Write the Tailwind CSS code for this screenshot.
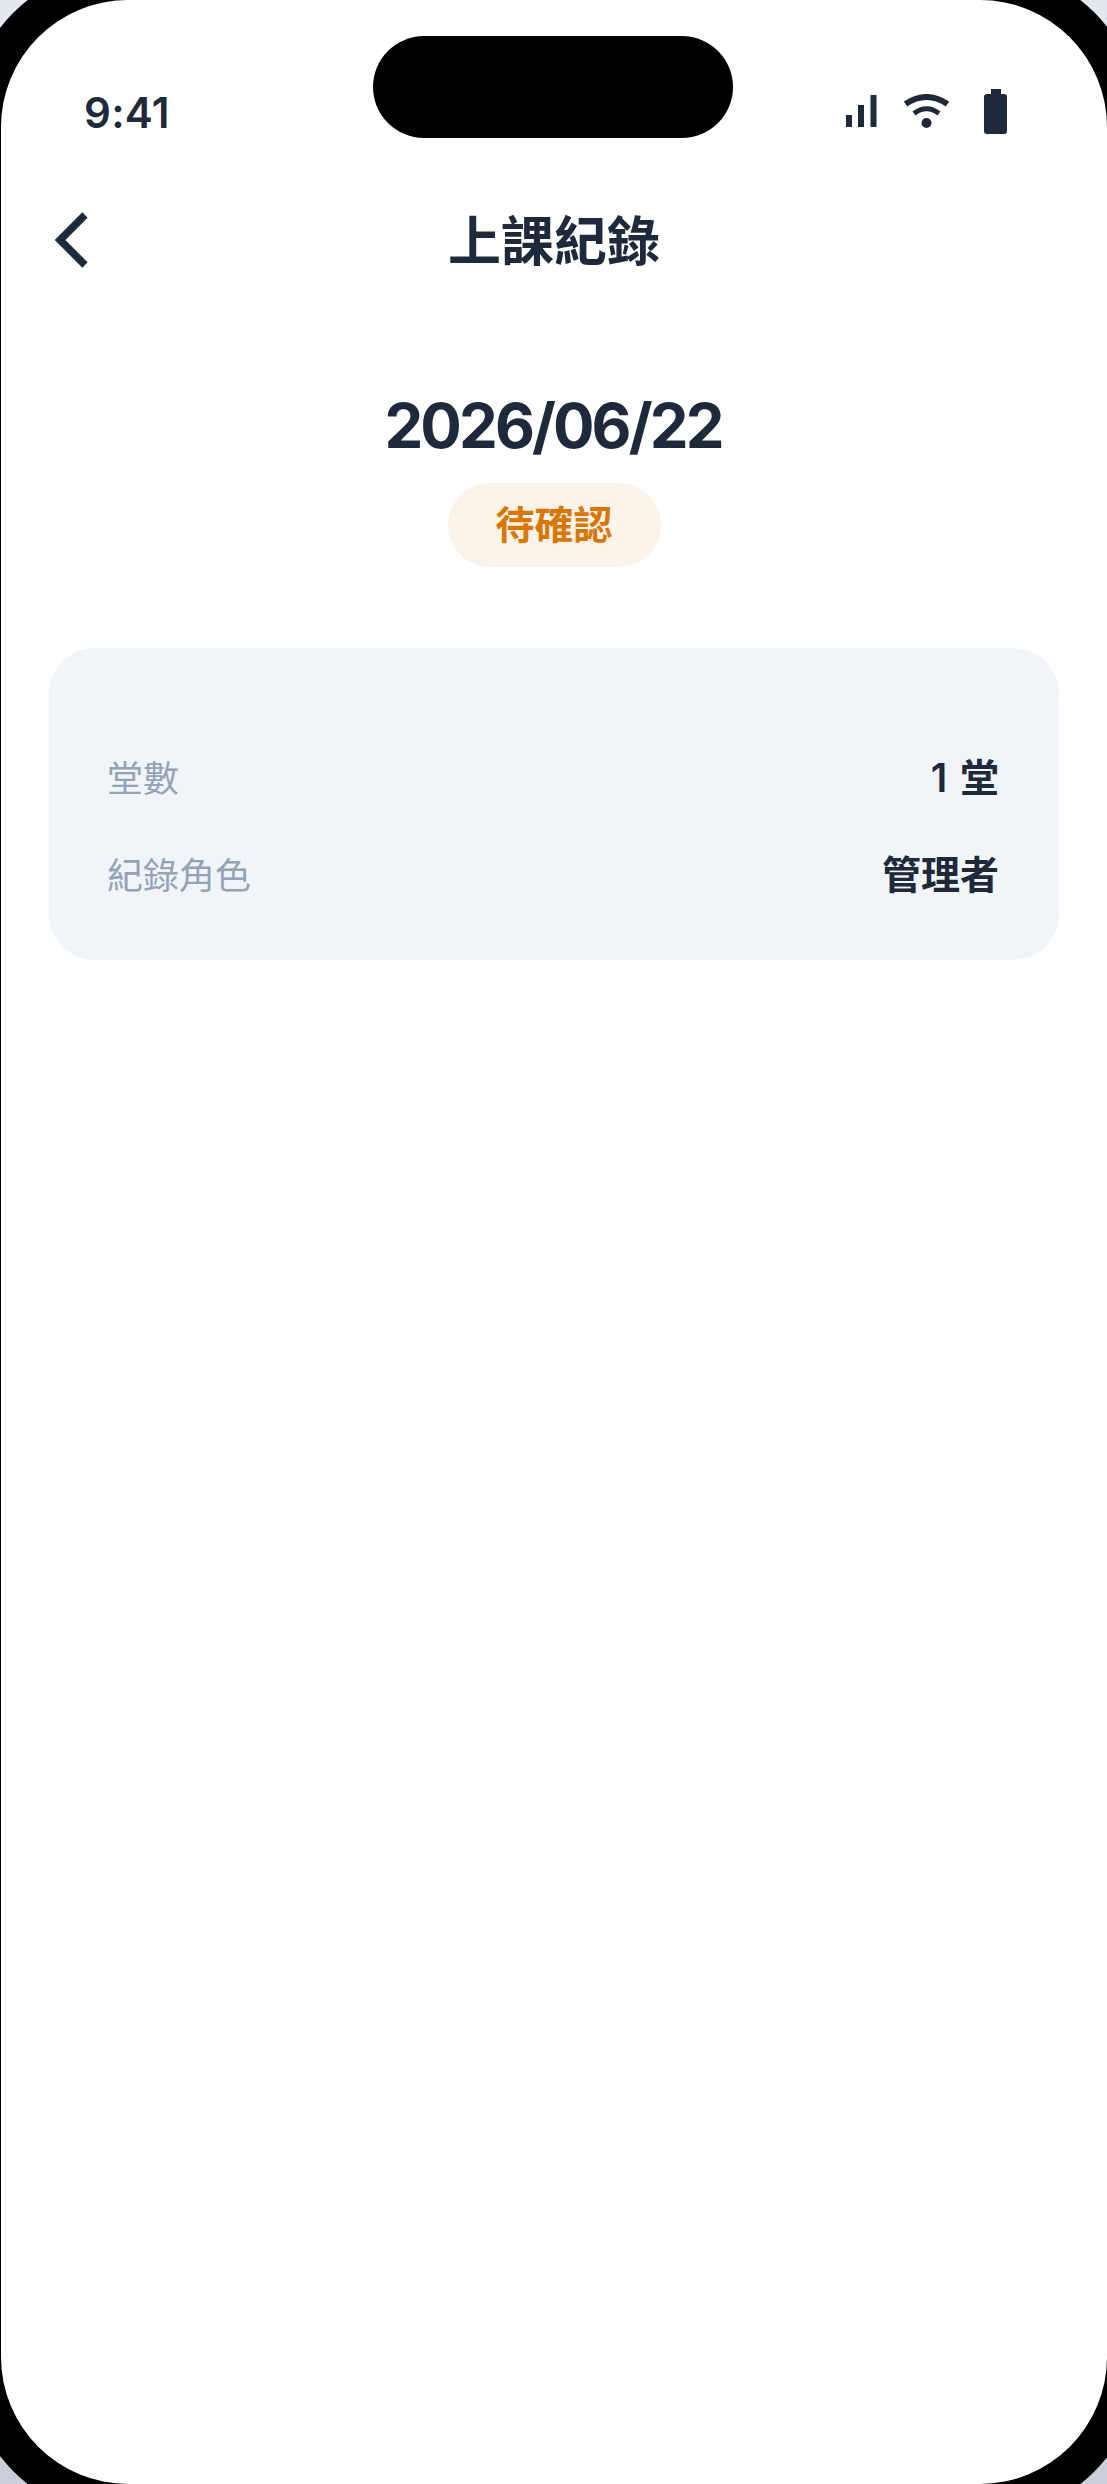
<!DOCTYPE html>
<html lang="zh-Hant">
<head>
    <meta charset="UTF-8">
    <meta name="viewport" content="width=device-width, initial-scale=1.0">
    <title>上課紀錄</title>
    <script src="https://cdn.jsdelivr.net/npm/@tailwindcss/browser@4"></script>
</head>
<body class="w-[1107px] h-[2484px] overflow-hidden bg-gradient-to-b from-[#e2e8f0] to-[#c9ced9] font-['Inter','Noto_Sans_CJK_TC',sans-serif] text-[#1e293b]">

    <!-- phone frame -->
    <div class="w-[1174px] h-[2552px] -ml-[33px] -mt-[34px] p-[34px] rounded-[159px] bg-black">
        <div class="relative w-[1106px] h-[2484px] rounded-[127px] bg-white overflow-hidden">

            <!-- dynamic island -->
            <div class="absolute left-[372px] top-[36px] w-[360px] h-[102px] rounded-full bg-black"></div>

            <!-- status bar -->
            <div class="flex items-center justify-between h-[46px] mt-[88px] pl-[83px] pr-[100px]">
                <span class="pt-[4px] text-[42px] leading-[46px] font-semibold tracking-[0.3px]">9:41</span>
                <div class="flex items-center">
                    <svg class="w-[31px] h-[32px]" viewBox="0 0 31 32" fill="#1e293b">
                        <rect x="0" y="20" width="6" height="12"></rect>
                        <rect x="12" y="10" width="6" height="22"></rect>
                        <rect x="24.500" y="0" width="6" height="32"></rect>
                    </svg>
                    <svg class="w-[47px] h-[34px] ml-[26px]" viewBox="0 0 47 34" fill="none" stroke="#1e293b">
                        <path d="M2.500 10 Q23.500 -4 44.500 10" stroke-width="6"></path>
                        <path d="M11 19.500 Q23.500 10 36 19.500" stroke-width="5"></path>
                        <circle cx="23.500" cy="29" r="5" fill="#1e293b" stroke="none"></circle>
                    </svg>
                    <svg class="w-[23px] h-[45px] ml-[34px]" viewBox="0 0 23 45" fill="#1e293b">
                        <rect x="7" y="0" width="10" height="6"></rect>
                        <rect x="0" y="5" width="23" height="40" rx="3"></rect>
                    </svg>
                </div>
            </div>

            <!-- nav -->
            <div class="grid grid-cols-[1fr_auto_1fr] items-center h-[80px] mt-[66px] px-[52px]">
                <svg class="w-[36px] h-[60px]" viewBox="0 0 36 60" fill="none" stroke="#1e293b" stroke-width="7.500">
                    <path d="M32 5 L7 30 L32 55"></path>
                </svg>
                <h1 class="mt-[3px] text-[53px] leading-[74px] font-semibold">上課紀錄</h1>
                <div></div>
            </div>

            <!-- date + status -->
            <div class="flex flex-col items-center mt-[105px]">
                <p class="pt-[1px] pr-[2px] text-[61.600px] leading-[80px] font-bold tracking-[-2.900px]">2026/06/22</p>
                <span class="mt-[17px] flex items-center justify-center w-[213px] h-[84px] rounded-full bg-[#fcf3ea] text-[39px] font-semibold text-[#d97706]">待確認</span>
            </div>

            <!-- info card -->
            <div class="mx-[48px] mt-[81px] h-[312px] rounded-[46px] bg-[#f1f5f9] pl-[58px] pr-[60px] pt-[105px]">
                <div class="flex items-center justify-between h-[50px]">
                    <span class="pt-[2px] text-[36px] text-[#94a3b8]">堂數</span>
                    <span class="text-[39px] font-semibold [word-spacing:3px]">1 堂</span>
                </div>
                <div class="flex items-center justify-between h-[50px] mt-[47px]">
                    <span class="pt-[1px] text-[36px] text-[#94a3b8]">紀錄角色</span>
                    <span class="text-[39px] font-semibold">管理者</span>
                </div>
            </div>
        </div>
    </div>

</body>
</html>
